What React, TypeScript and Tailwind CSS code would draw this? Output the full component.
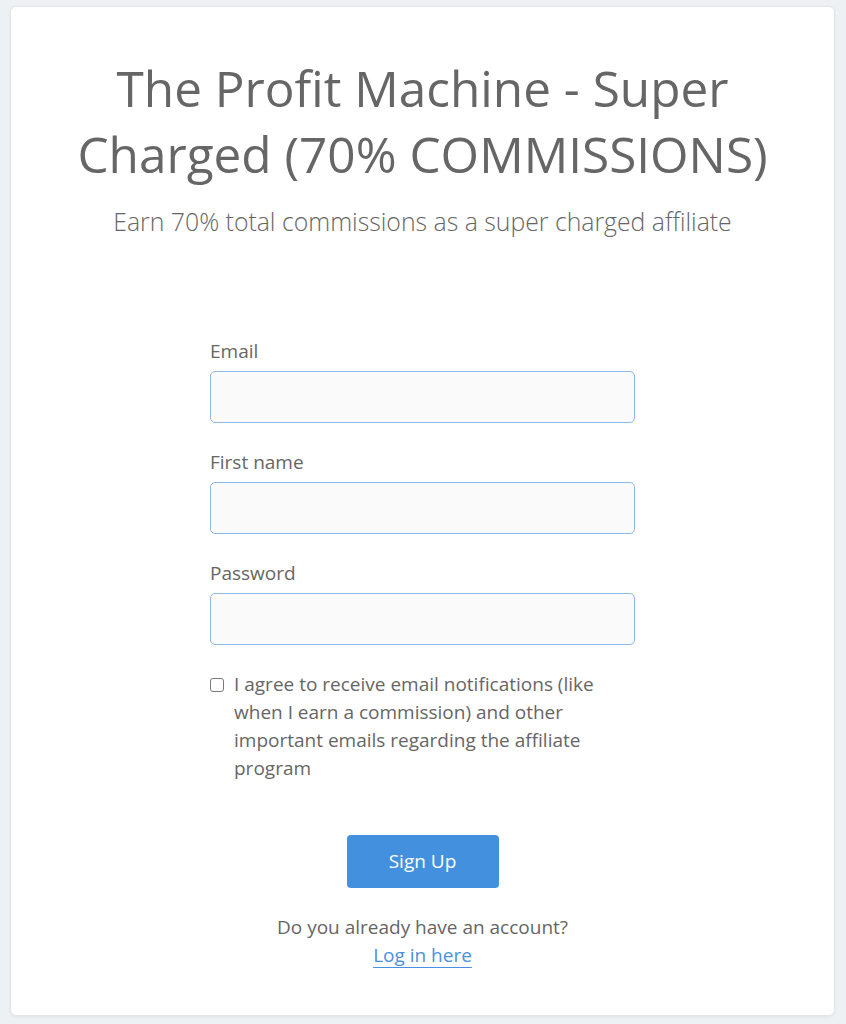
import React from "react";

function Field({ label, type }: { label: string; type: string }) {
  return (
    <div className="flex flex-col">
      <label className="pt-[2px] text-[19px] leading-[24px] text-[#666666]">{label}</label>
      <input
        type={type}
        className="mt-[8px] h-[52px] w-full rounded-[5px] border border-[#8ab9ef] bg-[#fafafa] px-3 outline-none"
      />
    </div>
  );
}

export default function App() {
  return (
    <div
      className="min-h-[1024px] w-full bg-[#eef1f4] pt-[6px] pb-[8px] px-[10px]"
      style={{ fontFamily: '"Open Sans", "Liberation Sans", sans-serif' }}
    >
      <div className="h-[1010px] w-[825px] rounded-[6px] border border-[#e2e6ea] bg-white shadow-[0_1px_3px_rgba(0,0,0,0.06)] pt-[48px]">
        <h1 className="mx-auto max-w-[740px] text-center text-[49.5px] leading-[66px] font-normal text-[#666666]">
          The Profit Machine - Super Charged (70% COMMISSIONS)
        </h1>
        <p className="mt-[18px] text-center text-[24.8px] leading-[32px] font-light text-[#666666]">
          Earn 70% total commissions as a super charged affiliate
        </p>

        <form className="mx-auto mt-[100px] w-[425px]" onSubmit={(e) => e.preventDefault()}>
          <div className="flex flex-col gap-[25px]">
            <Field label="Email" type="email" />
            <Field label="First name" type="text" />
            <Field label="Password" type="password" />
          </div>

          <label className="mt-[25px] flex items-start text-[19px] leading-[28px] text-[#666666]">
            <input
              type="checkbox"
              className="mt-[8px] h-[14px] w-[14px] shrink-0 appearance-none rounded-[3px] border border-[#7a7a7a] bg-white"
            />
            <span className="ml-[10px] w-[380px]">
              I agree to receive email notifications (like when I earn a commission) and other
              important emails regarding the affiliate program
            </span>
          </label>

          <div className="mt-[53px] flex justify-center">
            <button
              type="submit"
              className="h-[53px] w-[152px] rounded-[4px] bg-[#4391de] text-[19px] text-white"
            >
              Sign Up
            </button>
          </div>

          <div className="mt-[25px] text-center text-[19px] leading-[28px] text-[#666666]">
            <div>Do you already have an account?</div>
            <a href="#" className="text-[#4a90e2] underline underline-offset-[5px] decoration-1">
              Log in here
            </a>
          </div>
        </form>
      </div>
    </div>
  );
}
